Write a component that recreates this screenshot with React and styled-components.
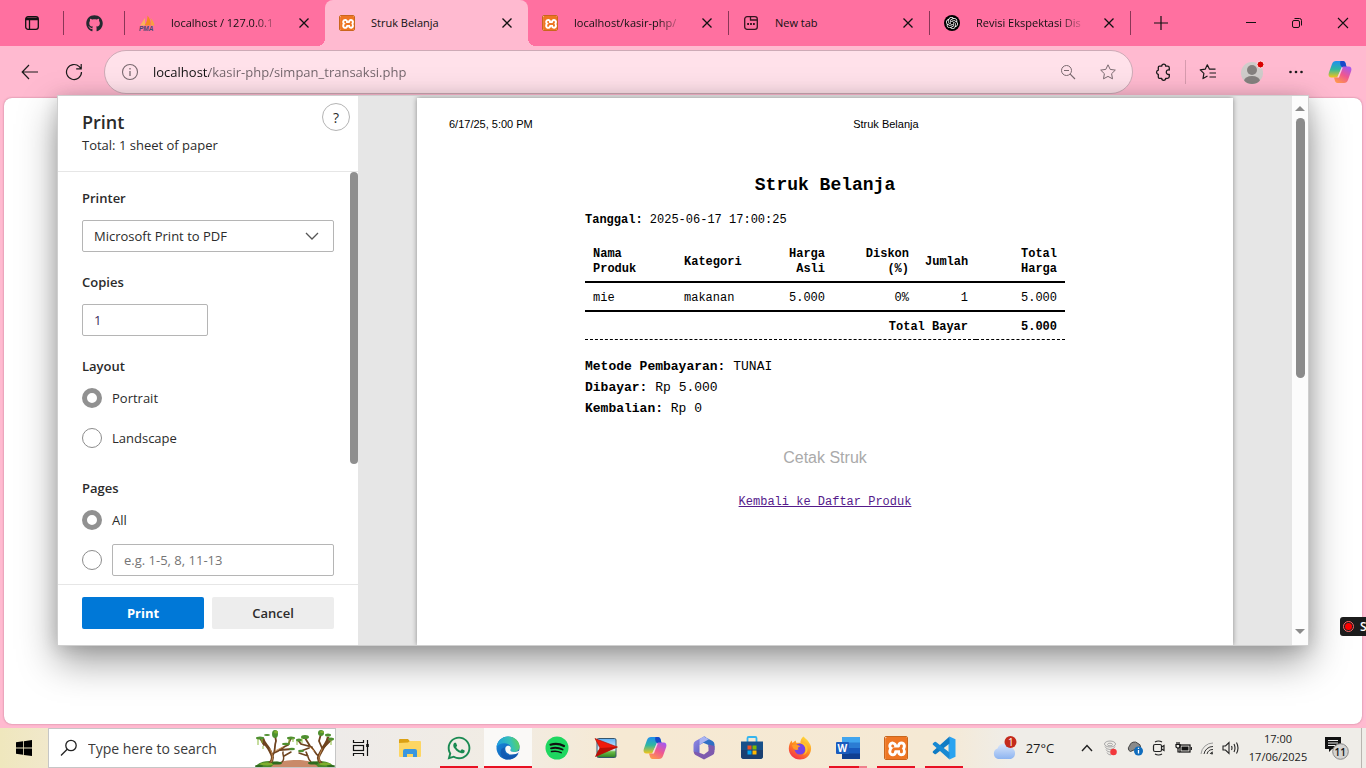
import React from "react";
import styled, { createGlobalStyle, css } from "styled-components";
import { FaGithub, FaWhatsapp } from "react-icons/fa";
import { SiXampp, SiOpenai } from "react-icons/si";

const ui = '"Open Sans", "Noto Sans", sans-serif';
const mono = '"Liberation Mono", monospace';
const arial = '"Liberation Sans", sans-serif';

const Global = createGlobalStyle`
  * { box-sizing: border-box; }
  body { margin: 0; font-family: ${ui}; font-size: 13px; color: #2b2b2b; overflow: hidden; }
  button, input, select { font: inherit; color: inherit; }
  button { border: 0; padding: 0; background: none; display: flex; align-items: center; justify-content: center; }
  svg { display: block; flex: none; }
`;

const Screen = styled.div`
  min-height: 100vh;
  display: flex;
  flex-direction: column;
  background: #ffbad0;
`;

/* ---------- tab strip ---------- */
const TabStrip = styled.header`
  height: 46px;
  display: flex;
  align-items: stretch;
  background: #ff70a0;
  color: #111;
`;
const StripButton = styled.button`
  width: ${(p) => p.$w}px;
  flex: none;
`;
const Divider = styled.span`
  width: 1px;
  height: 24px;
  flex: none;
  align-self: center;
  background: ${(p) => (p.$soft ? "#d79bae" : "#8a3656")};
`;
const Tab = styled.div`
  position: relative;
  flex: 0 1 ${(p) => (p.$active ? 203 : 200)}px;
  min-width: 0;
  display: flex;
  align-items: center;
  gap: 16px;
  padding: 0 14px;
  ${(p) =>
    p.$active &&
    css`
      background: #ffbad0;
      border-radius: 8px 8px 0 0;
      &::before,
      &::after {
        content: "";
        position: absolute;
        bottom: 0;
        width: 8px;
        height: 8px;
      }
      &::before {
        left: -8px;
        background: radial-gradient(circle at 0 0, transparent 8px, #ffbad0 8px);
      }
      &::after {
        right: -8px;
        background: radial-gradient(circle at 100% 0, transparent 8px, #ffbad0 8px);
      }
    `}
`;
const TabTitle = styled.button`
  flex: 1;
  min-width: 0;
  justify-content: flex-start;
  white-space: nowrap;
  font-size: 11px;
  line-height: 20px;
  mask-image: ${(p) => (p.$fade ? "linear-gradient(to right, #000 76%, transparent 100%)" : "none")};
`;
const WindowControls = styled.div`
  margin-left: auto;
  display: flex;
`;

/* ---------- toolbar ---------- */
const Toolbar = styled.nav`
  height: 52px;
  display: flex;
  align-items: center;
  padding: 0 4px 0 8px;
`;
const ToolButton = styled.button`
  width: 44px;
  height: 40px;
  flex: none;
  color: #1b1b1b;
`;
const AddressBar = styled.label`
  flex: 1;
  height: 44px;
  margin: 0 8px;
  display: flex;
  align-items: center;
  gap: 14px;
  padding: 0 16px;
  border: 1px solid #cdaab6;
  border-radius: 22px;
  background: #ffe1ea;
  color: #7a6a70;
`;
const AddressInput = styled.input`
  flex: 1;
  min-width: 0;
  border: 0;
  padding: 0;
  outline: 0;
  font-size: 13px;
  line-height: 20px;
  color: transparent;
  background: linear-gradient(to right, #111 56px, #6f6268 56px);
  background-clip: text;
  -webkit-background-clip: text;
`;
const BarActions = styled.span`
  display: flex;
  gap: 24px;
`;

/* ---------- page and dialog ---------- */
const PageArea = styled.main`
  position: relative;
  flex: 1;
  margin: 0 4px 4px;
  padding-bottom: 75px;
  background: #fff;
  border-radius: 8px;
  box-shadow: 0 0 2px rgba(120, 40, 70, 0.5);
`;
const Dialog = styled.section`
  position: relative;
  top: -3px;
  margin: 0 53px;
  display: flex;
  border: 1px solid #cfcfcf;
  background: #fff;
  box-shadow: 0 16px 36px rgba(0, 0, 0, 0.38), 0 2px 16px rgba(0, 0, 0, 0.14);
`;
const Settings = styled.form`
  width: 300px;
  flex: none;
  display: flex;
  flex-direction: column;
`;
const SettingsHead = styled.div`
  display: flex;
  justify-content: space-between;
  align-items: flex-start;
  height: 76px;
  padding: 7px 8px 0 24px;
  border-bottom: 1px solid #e6e6e6;
`;
const Heading = styled.h1`
  margin: 6px 0 0;
  font-size: 18px;
  line-height: 26px;
  font-weight: 600;
`;
const SubHeading = styled.p`
  margin: 0;
  font-size: 13px;
  line-height: 20px;
`;
const HelpButton = styled.button`
  width: 28px;
  height: 28px;
  border: 1px solid #b4b4b4;
  border-radius: 50%;
  font-size: 14px;
`;
const SettingsBody = styled.div`
  display: flex;
`;
const Fields = styled.div`
  flex: 1;
  display: flex;
  flex-direction: column;
  gap: 20px;
  padding: 16px 16px 4px 24px;
`;
const Thumb = styled.span`
  width: 8px;
  height: 292px;
  border-radius: 4px;
  background: #8f8f8f;
`;
const Field = styled.div`
  display: flex;
  flex-direction: column;
  gap: ${(p) => (p.$tight ? 2 : 12)}px;
`;
const FieldLabel = styled.label`
  font-size: 13px;
  line-height: 20px;
  font-weight: 600;
`;
const boxed = css`
  height: 32px;
  border: 1px solid #b5b5b5;
  border-radius: 2px;
  padding: 0 11px;
  background: transparent;
  outline: 0;
`;
const SelectBox = styled.div`
  display: grid;
  align-items: center;
  & > * {
    grid-area: 1 / 1;
  }
  & > svg {
    justify-self: end;
    margin-right: 15px;
  }
`;
const Select = styled.select`
  ${boxed}
  width: 100%;
  appearance: none;
`;
const CopiesInput = styled.input`
  ${boxed}
  width: 126px;
  color: #3b2a5c;
`;
const RangeInput = styled.input`
  ${boxed}
  flex: 1;
  min-width: 0;
  &::placeholder {
    color: #757575;
  }
`;
const RadioRow = styled.div`
  height: 40px;
  display: flex;
  align-items: center;
  gap: 10px;
`;
const Radio = styled.input`
  appearance: none;
  width: 20px;
  height: 20px;
  flex: none;
  margin: 0;
  border: 1px solid #8c8c8c;
  border-radius: 50%;
  &:checked {
    border: 5px solid #919191;
  }
`;
const Actions = styled.div`
  display: flex;
  gap: 8px;
  padding: 12px 24px 16px;
  border-top: 1px solid #e6e6e6;
`;
const ActionButton = styled.button`
  flex: 1;
  height: 32px;
  border-radius: 2px;
  font-weight: ${(p) => (p.$primary ? 700 : 600)};
  background: ${(p) => (p.$primary ? "#0078d7" : "#ededed")};
  color: ${(p) => (p.$primary ? "#fff" : "#2b2b2b")};
`;
const Preview = styled.div`
  flex: 1;
  min-width: 0;
  display: flex;
  justify-content: center;
  padding-top: 2px;
  overflow: hidden;
  background: #e6e6e6;
`;
const Sheet = styled.article`
  width: 816px;
  background: #fff;
  color: #000;
  box-shadow: 0 0 5px rgba(0, 0, 0, 0.4);
`;
const SheetHeader = styled.div`
  display: flex;
  padding: 19px 0 0 32px;
  font: 11px/14px ${arial};
`;
const SheetTitle = styled.span`
  flex: 1;
  margin-left: 6px;
  text-align: center;
`;
const Receipt = styled.div`
  width: 480px;
  max-width: 100%;
  margin: 0 auto;
  padding-top: 44px;
  font: 12px/21px ${mono};
`;
const ReceiptTitle = styled.h2`
  margin: 0 0 14px;
  font-size: 18px;
  line-height: 21px;
  text-align: center;
`;
const Line = styled.p`
  margin: 0;
  font-size: ${(p) => (p.$large ? 13 : 12)}px;
`;
const ItemTable = styled.table`
  width: 100%;
  margin: 8px 0 16px;
  table-layout: fixed;
  border-collapse: separate;
  border-spacing: 0;
  line-height: 15px;
`;
const Cell = styled.td`
  padding: 8px 8px 4px;
  text-align: ${(p) => (p.$left ? "left" : "right")};
  font-weight: ${(p) => (p.$bold ? 700 : 400)};
  border-bottom: ${(p) => (p.$last ? "1px dashed #000" : "2px solid #000")};
`;
const ReceiptFooter = styled.div`
  display: flex;
  flex-direction: column;
  align-items: center;
  gap: 24px;
  padding-top: 28px;
`;
const DisabledButton = styled.button`
  font: 16px/21px ${arial};
  color: #aaa;
`;
const BackLink = styled.a`
  color: #551a8b;
`;
const ScrollBar = styled.div`
  width: 16px;
  flex: none;
  display: flex;
  flex-direction: column;
  align-items: center;
  padding: 9px 0 10px;
  background: #fcfcfc;
`;
const ScrollThumb = styled.span`
  width: 9px;
  height: 260px;
  margin: 7px 0 auto;
  border-radius: 5px;
  background: #8b8b8b;
`;
const Recorder = styled.div`
  position: absolute;
  right: -4px;
  bottom: 88px;
  width: 26px;
  height: 19px;
  display: flex;
  align-items: center;
  gap: 6px;
  padding-left: 3px;
  border-radius: 3px 0 0 3px;
  background: #1c1c1c;
  color: #fff;
  font-size: 12px;
  font-weight: 600;
`;

/* ---------- taskbar ---------- */
const Taskbar = styled.footer`
  height: 40px;
  display: flex;
  background: linear-gradient(to right, #efe7bd 0, #f1e8cb 48px, #eeebe9 336px, #f1ece4 500px, #f6e9d3 620px, #f5e9d4 940px, #efede8 1010px);
  color: #1b1b1b;
`;
const StartButton = styled.button`
  width: 48px;
`;
const SearchBox = styled.label`
  width: 288px;
  display: flex;
  align-items: center;
  gap: 10px;
  padding-left: 11px;
  overflow: hidden;
  border: 1px solid #c6c6c6;
  background: #fff;
`;
const SearchInput = styled.input`
  flex: 1;
  min-width: 0;
  border: 0;
  padding: 0;
  outline: 0;
  font-size: 14px;
  &::placeholder {
    color: #3b3b3b;
  }
`;
const Apps = styled.div`
  display: flex;
  gap: ${(p) => p.$gap}px;
  padding-left: ${(p) => p.$gap}px;
`;
const AppButton = styled.button`
  width: 48px;
  height: 40px;
  background-color: ${(p) => (p.$focused ? "#faf9f7" : "transparent")};
  background-image: ${(p) => {
    if (!p.$open) return "none";
    return p.$multi
      ? "linear-gradient(to right, #e81123 30px, #f0808c 30px)"
      : "linear-gradient(#e81123, #e81123)";
  }};
  background-repeat: no-repeat;
  background-position: center bottom;
  background-size: ${(p) => (p.$focused ? "48px" : "38px")} 2px;
`;
const Tray = styled.div`
  margin-left: auto;
  display: flex;
  align-items: center;
`;
const TrayButton = styled.button`
  width: ${(p) => p.$w || 24}px;
  height: 40px;
  gap: 8px;
`;
const Weather = styled(TrayButton)`
  margin-right: 16px;
`;
const Clock = styled.button`
  width: 70px;
  flex-direction: column;
  font-size: 11px;
  line-height: 18px;
`;
const ShowDesktop = styled.button`
  width: 5px;
  height: 40px;
  border-left: 1px solid #b9b5b0;
`;

/* ---------- icons ---------- */
const Svg = ({ s = 16, w, h, vb, children, ...rest }) => (
  <svg width={w || s} height={h || s} viewBox={vb || `0 0 ${w || s} ${h || s}`} fill="none" stroke="currentColor" strokeWidth="1" aria-hidden="true" {...rest}>
    {children}
  </svg>
);
const CloseIcon = ({ s = 14, r = 4.5, sw = 1.3 }) => (
  <Svg s={s} strokeWidth={sw}>
    <path d={`M${7 - r} ${7 - r}L${7 + r} ${7 + r}M${7 + r} ${7 - r}L${7 - r} ${7 + r}`} />
  </Svg>
);
const TabActionsIcon = () => (
  <Svg s={16} strokeWidth="1.3">
    <rect x="1.7" y="1.7" width="12.6" height="12.6" rx="2.4" />
    <path d="M2 3.4h12M2 4.4h12" strokeWidth="1.6" />
    <path d="M5.5 5v9" />
  </Svg>
);
const NewTabIcon = () => (
  <Svg s={16} strokeWidth="1.3" stroke="#35141f">
    <rect x="1.7" y="1.7" width="12.6" height="12.6" rx="2.4" />
    <path d="M7.5 2v3h6.5" />
    <path d="M4.2 9h1.8M7.1 9h1.8M10 9h1.8" strokeWidth="1.8" />
  </Svg>
);
const PmaIcon = () => (
  <Svg s={16} stroke="none">
    <path d="M1 10.500L6 3V10.500z" fill="#f9b45c" />
    <path d="M5.500 10.500C8 7 8.500 4 8.500 .5C11 3 12 7 11.500 10.500z" fill="#f68b1f" />
    <path d="M12 10.500C12.500 8 12 5 11.500 3C14 5.500 15 8 15.500 10.500z" fill="#f7a23b" />
    <text x="0" y="16" fontSize="6.500" fontWeight="700" fontStyle="italic" fontFamily="Liberation Sans" fill="#46486f">PMA</text>
  </Svg>
);
const XamppBox = styled.span`
  display: grid;
  place-items: center;
  width: ${(p) => p.$s}px;
  height: ${(p) => p.$s}px;
  border-radius: 2px;
  background: #fff;
  color: #ee7623;
  border: 1px solid #c9661c;
  overflow: hidden;
  flex: none;
`;
const XamppIcon = ({ s = 16 }) => (
  <XamppBox $s={s}>
    <SiXampp size={s} />
  </XamppBox>
);
const OpenAiBadge = styled.span`
  display: grid;
  place-items: center;
  width: 16px;
  height: 16px;
  flex: none;
  border-radius: 50%;
  background: #000;
  color: #fff;
`;
const BackIcon = () => (
  <Svg s={18} strokeWidth="1.2"><path d="M17 9H1.500M8 2L1.200 9L8 16" /></Svg>
);
const ReloadIcon = () => (
  <Svg s={18} strokeWidth="1.2"><path d="M16.500 9A7.500 7.500 0 1 1 14.300 3.700L16 5.500M16.200 1v4.800h-5" /></Svg>
);
const InfoIcon = () => (
  <Svg s={18} strokeWidth="1.1"><circle cx="9" cy="9" r="7.500" /><path d="M9 8v5M9 5v1.500" strokeWidth="1.300" /></Svg>
);
const ZoomOutIcon = () => (
  <Svg s={16}><circle cx="6.500" cy="6.500" r="5" /><path d="M4 6.500h5M10.200 10.200L15 15" strokeWidth="1.200" /></Svg>
);
const StarIcon = () => (
  <Svg s={16}><path d="M8 .8L10.200 5.400L15.300 6.100L11.600 9.700L12.500 14.800L8 12.400L3.500 14.800L4.400 9.700L.7 6.100L5.800 5.400Z" strokeLinejoin="round" /></Svg>
);
const PuzzleIcon = () => (
  <Svg s={18} strokeWidth="1.300"><path d="M5.500 3.200H7.700A2 2 0 0 1 11.700 3.200H13.500Q15.300 3.200 15.300 5V7C13.500 6.600 12.300 7.600 12.300 9.200S13.500 11.800 15.300 11.400V13.500Q15.300 15.300 13.500 15.300H11.700A2 2 0 0 1 7.700 15.300H5.500Q4.300 15.300 4.300 14V11.500A2.200 2.200 0 0 1 4.300 7.200V4.500Q4.300 3.200 5.500 3.200Z" strokeLinejoin="round" /></Svg>
);
const FavoritesIcon = () => (
  <Svg s={18} strokeWidth="1.200"><path d="M8.500 13L4 15.600L4.900 10.400L1.200 6.900L6.200 6.200L8.300 1.800L10.500 6.200H16.500M10.500 10H17M10.500 14H17" strokeLinejoin="round" /></Svg>
);
const ProfileIcon = () => (
  <Svg s={24} stroke="none">
    <defs><clipPath id="pf"><circle cx="12" cy="13" r="11" /></clipPath></defs>
    <circle cx="12" cy="13" r="11" fill="#cfccca" />
    <g clipPath="url(#pf)" fill="#85817f"><circle cx="12" cy="10" r="5" /><ellipse cx="12" cy="21" rx="8" ry="5" /></g>
    <circle cx="20.500" cy="4.500" r="3.500" fill="#d80000" stroke="#ffe0e8" />
  </Svg>
);
const DotsIcon = () => (
  <Svg s={16} stroke="none" fill="currentColor"><circle cx="2.500" cy="8" r="1.300" /><circle cx="8" cy="8" r="1.300" /><circle cx="13.500" cy="8" r="1.300" /></Svg>
);
const CopilotIcon = ({ id }) => (
  <Svg s={24} stroke="none">
    <defs>
      <linearGradient id={id + "a"} x1="0" y1="0" x2="0" y2="1"><stop offset="0" stopColor="#1f8ef0" /><stop offset=".5" stopColor="#2fb7a0" /><stop offset="1" stopColor="#f5c518" /></linearGradient>
      <linearGradient id={id + "b"} x1=".8" y1="0" x2=".2" y2="1"><stop offset="0" stopColor="#a558f0" /><stop offset=".5" stopColor="#f0588f" /><stop offset="1" stopColor="#ff9a4a" /></linearGradient>
    </defs>
    <path d="M8 1h7c1.500 0 2.200 1 2.600 2.500L18.500 7H14L10 15.500C9.500 17 9 17.500 7.500 17.500H3.500C1 17.500 0 15.500 .8 13L4 4C4.700 2 6 1 8 1z" fill={`url(#${id}a)`} />
    <path d="M12.500 1h2.500c1.500 0 2.200 1 2.600 2.500L18.500 7H14.500c-1.500 0-3-3-2-6z" fill="#1748c9" />
    <path d="M16 23H9.500c-1.500 0-2.200-1-2.600-2.500L6 17.500h4L13.500 8c.5-1 1.200-1.500 2.500-1.500h4.500c2.500 0 3.500 2 2.700 4.500L20 20c-.7 2-2 3-4 3z" fill={`url(#${id}b)`} />
    <path d="M14.200 7.500L10.300 17.500" stroke="#fff" strokeOpacity=".7" strokeWidth="1.200" />
  </Svg>
);
const ChevronDown = () => (
  <Svg w={14} h={8} stroke="#555" strokeWidth="1.300"><path d="M1 1L7 7L13 1" /></Svg>
);
const Arrow = ({ up }) => (
  <Svg w={10} h={6} stroke="none" fill="#8b8b8b"><path d={up ? "M0 6L5 1L10 6z" : "M0 0L5 5L10 0z"} /></Svg>
);
const RecordIcon = () => (
  <Svg s={11} stroke="#f66"><circle cx="5.500" cy="5.500" r="5" /><circle cx="5.500" cy="5.500" r="3.500" fill="#f00" stroke="none" /></Svg>
);
const WindowsIcon = () => (
  <Svg s={16} stroke="none" fill="#000"><path d="M0 2.200L7 1.300V7.600H0zM7.800 1.200L16 0V7.600H7.800zM0 8.400H7V14.700L0 13.800zM7.800 8.400H16V16L7.800 14.900z" /></Svg>
);
const SearchIcon = () => (
  <Svg s={18} stroke="#222" strokeWidth="1.300"><circle cx="11" cy="6.500" r="5.200" /><path d="M7.200 10.300L1 16.500" /></Svg>
);
const TreesArt = () => (
  <Svg w={80} h={38} stroke="none">
    <path d="M0 38C3 34 8 32 14 32L30 33.500H50L64 32C72 32 77 35 80 38z" fill="#4a8a2a" />
    <path d="M16 38C20 33 30 31 42 31S60 34 63 38z" fill="#c98a68" />
    <g stroke="#6e431f" strokeLinecap="round" fill="none">
      <path d="M15 34C20 29 16 24 14 20C12 16 9 15 8 10" strokeWidth="3" />
      <path d="M17 27C21 24 19 17 21 12L20 6M19 24C25 22 27 18 33 16L36 9M9 16L5 9M25 21L37 20" strokeWidth="1.800" />
      <path d="M66 34C60 29 66 24 68 19C70 15 73 13 73 9" strokeWidth="3" />
      <path d="M64 27C59 25 60 20 55 17L50 9M57 18L46 15L43 11M69 18L77 10M67 19L64 12L66 5M54 19L46 22" strokeWidth="1.800" />
      <path d="M27 33C31 29 27 26 28 23M29 27L36 23M56 33C52 29 53 26 51 23M53 27L44 24" strokeWidth="1.500" />
    </g>
    <g stroke="#c48a50" strokeLinecap="round" strokeWidth="1" fill="none">
      <path d="M16 33C19 29 17 24 15 20M65 33C62 28 66 24 67 20M20 22L28 18M59 22L55 18" />
    </g>
    <g fill="#4f9030">
      <ellipse cx="20" cy="5" rx="3" ry="4" /><ellipse cx="5" cy="9" rx="4" ry="1.500" /><ellipse cx="36" cy="9" rx="4" ry="1.500" /><ellipse cx="31" cy="15" rx="4" ry="1.200" />
      <ellipse cx="37" cy="20" rx="3" ry="1.200" /><ellipse cx="50" cy="8" rx="4" ry="2" /><ellipse cx="44" cy="11" rx="3" ry="1.500" /><ellipse cx="66" cy="4" rx="3" ry="3" />
      <ellipse cx="76" cy="10" rx="3" ry="1.500" /><ellipse cx="73" cy="6" rx="3" ry="1.500" /><ellipse cx="46" cy="22" rx="3" ry="1.200" /><ellipse cx="12" cy="6" rx="3" ry="1" />
    </g>
    <path d="M3 10V16M7 10V14M34 10V14M38 9V13M47 9V14M76 11V16M8 17V20M42 12V16" stroke="#8dbb3f" strokeWidth="1" />
    <g fill="#7fae2e"><ellipse cx="12" cy="35" rx="7" ry="1.500" /><ellipse cx="70" cy="35" rx="6" ry="1.500" /><ellipse cx="21" cy="3" rx="2" ry="1.500" /><ellipse cx="67" cy="3" rx="2" ry="1" /></g>
    <g fill="#2d6a1f"><ellipse cx="22" cy="34" rx="5" ry="1.500" /><ellipse cx="58" cy="34" rx="5" ry="1.500" /><ellipse cx="4" cy="37" rx="4" ry="1" /><ellipse cx="76" cy="37" rx="4" ry="1" /></g>
  </Svg>
);
const TaskViewIcon = () => (
  <Svg s={18} stroke="#111" strokeWidth="1.200"><path d="M1.500 1V3.500H11.500V1M1.500 17V14.500H11.500V17M15.500 1V17" /><rect x="1.500" y="6.500" width="10" height="5" /><path d="M14.200 6.500h2.600" strokeWidth="3" /></Svg>
);
const ExplorerIcon = () => (
  <Svg s={22} stroke="none">
    <path d="M0 3Q0 2 1 2H9L11 4.500V8H0z" fill="#dba114" /><path d="M0 6L9 5.500L11 4H21Q22 4 22 5V19Q22 20 21 20H1Q0 20 0 19z" fill="#fdd663" />
    <path d="M4 20V14Q4 12 6 12H16Q18 12 18 14V20H14V17H8V20z" fill="#3a97e0" />
  </Svg>
);
const EdgeIcon = () => (
  <Svg s={24} stroke="none">
    <defs>
      <linearGradient id="eg" x1="0" y1=".4" x2="1" y2=".2"><stop offset="0" stopColor="#1f9fe0" /><stop offset=".6" stopColor="#36c2b4" /><stop offset="1" stopColor="#63d34f" /></linearGradient>
      <linearGradient id="eb" x1="0" y1="0" x2="1" y2="1"><stop offset="0" stopColor="#1a8fe0" /><stop offset="1" stopColor="#0f4fa8" /></linearGradient>
    </defs>
    <circle cx="12" cy="12" r="11.500" fill="url(#eb)" />
    <path d="M.6 11C1.500 4.500 6.300.4 12 .4C18.500.4 23.600 5 23.600 10.500C23.600 14 21 16 18 16C15.500 16 14 15 14.500 13.800C15.500 12.500 15 10 12.500 8.300C8.500 6 2.500 7.500.6 11z" fill="url(#eg)" />
    <path d="M9 11C7.500 15 10 20.500 16 20C18.500 20 20.500 19 22.500 17.500C21.500 20 18 23.500 12 23.500C6 23.500 3 17 5.500 13Z" fill="#1156ad" opacity=".75" />
    <path d="M9.500 11.500C8.500 15 11 18.500 15.500 18.500C19 18.500 21 17.500 22.800 16.200L23.500 18L24 14C22 15.500 20 16 18 16C15.500 16 14 15 14.500 13.800C15.300 12.500 15 11 13.500 10C12 9.500 10 10 9.500 11.500z" fill="#faf9f7" />
  </Svg>
);
const SpotifyGlyph = () => (
  <Svg s={24} strokeLinecap="round">
    <circle cx="12" cy="12" r="11.500" fill="#1ed760" stroke="none" />
    <path d="M5.500 8.700C10 7.300 15 7.800 19 10" stroke="#111" strokeWidth="2.200" /><path d="M6 12.300C10 11.200 14 11.700 17.600 13.500" stroke="#111" strokeWidth="1.900" /><path d="M6.500 15.600C10 14.700 13.200 15.100 16.200 16.700" stroke="#111" strokeWidth="1.500" />
  </Svg>
);
const MediaArrowIcon = () => (
  <Svg s={24} stroke="none">
    <defs><linearGradient id="ma" x1="0" y1="0" x2="0" y2="1"><stop offset="0" stopColor="#5fb0f5" /><stop offset=".6" stopColor="#e9f5fb" /><stop offset=".7" stopColor="#6cc04a" /><stop offset="1" stopColor="#2f7f22" /></linearGradient></defs>
    <rect x="3" y="2.500" width="19" height="19" rx="1.500" fill="url(#ma)" stroke="#35566d" />
    <path d="M1 2.500L23.500 11L1.500 20.500L6 12z" fill="#f01a0c" stroke="#a50d05" strokeWidth=".6" /><path d="M1.500 20.500L6 12L23.500 11z" fill="#b80f06" />
  </Svg>
);
const M365Icon = () => (
  <Svg s={24} stroke="none">
    <defs><linearGradient id="m3" x1="0" y1="0" x2="1" y2="1"><stop offset="0" stopColor="#9a8fe8" /><stop offset="1" stopColor="#4d52b8" /></linearGradient></defs>
    <path d="M12 .5L3.500 5Q1.500 6.200 1.500 8.500V15.500L7.500 18.500V9L14 5.500V1z" fill="url(#m3)" />
    <path d="M12 .5L20.500 5Q22.500 6.200 22.500 8.500V14L16.500 11V9L9.500 6z" fill="#2f6fc4" />
    <path d="M22.500 10V15.500Q22.500 17.800 20.500 19L12 23.500L3.500 19Q2 18 1.500 15.500L8 17L12 18.500L16.500 15V8.500z" fill="#7e5aae" />
    <path d="M12 .5L17 3.200L12 6L7.500 9V3z" fill="#a9b3f2" />
  </Svg>
);
const StoreIcon = () => (
  <Svg s={24} stroke="none">
    <path d="M7.500 6V2.200Q7.500 1 8.700 1H15.300Q16.500 1 16.500 2.200V6" stroke="#35b5ee" strokeWidth="1.800" fill="none" />
    <path d="M1 5.500H23V20Q23 23 20 23H4Q1 23 1 20z" fill="#17508a" />
    <path d="M1 14H23V20Q23 23 20 23H4Q1 23 1 20z" fill="#1a3f70" />
    <path d="M7.500 9.500h4v4h-4z" fill="#f25022" /><path d="M12.500 9.500h4v4h-4z" fill="#7fba00" /><path d="M7.500 14.500h4v4h-4z" fill="#00a4ef" /><path d="M12.500 14.500h4v4h-4z" fill="#ffb900" />
  </Svg>
);
const FirefoxIcon = () => (
  <Svg s={24} stroke="none">
    <defs><linearGradient id="ff" x1=".8" y1="0" x2=".2" y2="1"><stop offset="0" stopColor="#ffe23f" /><stop offset=".5" stopColor="#ff8a1f" /><stop offset="1" stopColor="#f5274f" /></linearGradient></defs>
    <path d="M15.500.5C18 3 19.500 4 21 6.500C23 9 23.500 12 22.800 15C21.500 20 17.500 23.500 12 23.500C5.500 23.500.8 18.500.8 12.500C.8 9 2.300 6 3.500 4.500L4.500 7L7.500 4.500L8.500 7C10 6.500 11 6.500 12.500 7C12 5 13.500 2 15.500.5z" fill="url(#ff)" />
    <circle cx="12" cy="13" r="5.500" fill="#7542e5" />
    <path d="M4 9C7 7.500 11 9 12.500 10.500C10 10.500 9.500 12 10.500 13.500C7.500 15 4.500 13 4 9z" fill="#ff9a28" />
    <path d="M12.500 7C15 8 17.500 10.500 17.500 14C17.500 16 16.500 18 15 19C19 18 20.500 14 19 10C18 8 15 6 12.500 7z" fill="#ffc22e" />
  </Svg>
);
const WordIcon = () => (
  <Svg s={24} stroke="none">
    <path d="M6 1H24V7H6z" fill="#41a5ee" /><path d="M6 6.500H24V12.500H6z" fill="#2b7cd3" /><path d="M6 12H24V18H6z" fill="#185abd" /><path d="M6 17.500H24V23H6z" fill="#103f91" />
    <rect x="0" y="6" width="13" height="12" rx="1" fill="#1b5cbe" />
    <text x="1.500" y="15.500" fontSize="10" fontWeight="700" fontFamily="Open Sans" fill="#fff">W</text>
  </Svg>
);
const VsCodeIcon = () => (
  <Svg s={24} stroke="none">
    <path d="M17.500.5L23.500 3.300V20.700L17.500 23.500L16.500 18V6z" fill="#2aa3f0" />
    <path d="M17.500.5L1 15.300Q.3 16 1 16.700L2.500 18Q3.200 18.500 4 18L17.500 7.500z" fill="#0f7bc4" />
    <path d="M17.500 23.500L1 8.700Q.3 8 1 7.300L2.500 6Q3.200 5.500 4 6L17.500 16.500z" fill="#1889d3" />
  </Svg>
);
const WeatherIcon = () => (
  <Svg w={26} h={24} stroke="none">
    <defs><linearGradient id="wc" x1="0" y1="0" x2="0" y2="1"><stop offset="0" stopColor="#dbe7fb" /><stop offset="1" stopColor="#8db4f0" /></linearGradient></defs>
    <path d="M6 23A5.500 5.500 0 0 1 5.500 12.500A7 7 0 0 1 18.500 11.500A6 6 0 0 1 19 23z" fill="url(#wc)" />
    <circle cx="18.500" cy="6" r="6" fill="#c42b1c" /><text x="16" y="10" fontSize="10" fontFamily="Open Sans" fill="#fff">1</text>
  </Svg>
);
const UpIcon = () => <Svg w={12} h={8} stroke="#222" strokeWidth="1.400"><path d="M1 7L6 1.500L11 7" /></Svg>;
const CastIcon = () => (
  <Svg s={16} stroke="#a8a8a8"><ellipse cx="7" cy="4" rx="5.500" ry="3" /><path d="M2 6.500Q3 9.500 7 9.500T12 6.500M3 9.500Q4 12 7 12M4 12.500Q5 15 8 15" /><ellipse cx="7" cy="4.500" rx="2.500" ry="1.300" /><circle cx="10.500" cy="12" r="3.300" fill="#f2383c" stroke="none" /></Svg>
);
const CloudInfoIcon = () => (
  <Svg s={16} stroke="none"><path d="M3.500 11.500A3.200 3.200 0 0 1 2.500 6A5 5 0 0 1 11 3.500A3.500 3.500 0 0 1 13.500 7z" fill="#8a8a8a" stroke="#444" /><circle cx="11.500" cy="11" r="4.500" fill="#0f6cbd" /><path d="M11.500 10V13.500M11.500 7.800V9" stroke="#fff" strokeWidth="1.300" /></Svg>
);
const MeetIcon = () => (
  <Svg s={16} stroke="#222" strokeWidth="1.200"><rect x="2.500" y="4.500" width="8" height="7" rx="1.500" /><path d="M10.500 7L13 5.500V10.500L10.500 9M4 2Q7.500 0 11 2M4 14Q7.500 16 11 14" /></Svg>
);
const BatteryIcon = () => (
  <Svg w={17} h={14} stroke="#111" strokeWidth="1.200"><rect x="5" y="4" width="10" height="7" /><path d="M6.500 5.500h7v4h-7z" fill="#111" stroke="none" /><path d="M16.300 6v3" /><path d="M1 3.500h4V6L3 7.500L1 6zM2 1v2M4 1v2M3 7.500V11H5" /></Svg>
);
const WifiIcon = () => (
  <Svg s={14} stroke="#333"><path d="M1 13A12 12 0 0 1 13 2" stroke="#999" /><path d="M4 13A9 9 0 0 1 13 5.500M7 13A6 6 0 0 1 13 8.500M10 13A3.500 3.500 0 0 1 13 11" /><circle cx="12" cy="12.500" r="1" fill="#333" stroke="none" /></Svg>
);
const VolumeIcon = () => (
  <Svg w={18} h={14} stroke="#222" strokeWidth="1.100"><path d="M1 5H3.500L7 1.500V12.500L3.500 9H1zM9.500 5Q10.500 7 9.500 9M12 3Q14 7 12 11M14.500 1.500Q17.500 7 14.500 12.500" /></Svg>
);
const NoticeIcon = () => (
  <Svg s={24} stroke="none">
    <path d="M0 1H16V13H7L4 16V13H0z" fill="#111" /><path d="M3 4.500H13M3 7H13M3 9.500H10" stroke="#eee" strokeWidth="1.100" />
    <circle cx="15.500" cy="15.500" r="7.800" fill="#d4d3d1" stroke="#888" /><text x="9.500" y="19.500" fontSize="10" fontFamily="Open Sans" fontWeight="600" fill="#111">11</text>
  </Svg>
);

const tabs = [
  { title: "localhost / 127.0.0.1", fade: true, icon: <PmaIcon /> },
  { title: "Struk Belanja", active: true, icon: <XamppIcon /> },
  { title: "localhost/kasir-php/", fade: true, icon: <XamppIcon />, line: true },
  { title: "New tab", icon: <NewTabIcon />, line: true },
  { title: "Revisi Ekspektasi Dis", fade: true, icon: <OpenAiBadge><SiOpenai size={12} /></OpenAiBadge>, line: true },
];

const cols = [91, 73, 84, 84, 59, 89];
const heads = ["Nama Produk", "Kategori", "Harga Asli", "Diskon (%)", "Jumlah", "Total Harga"];
const item = ["mie", "makanan", "5.000", "0%", "1", "5.000"];

const pinned = [
  { name: "Task View", icon: <TaskViewIcon /> },
  { name: "File Explorer", icon: <ExplorerIcon /> },
  { name: "WhatsApp", icon: <FaWhatsapp size={26} color="#1a8a52" />, open: true },
  { name: "Edge", icon: <EdgeIcon />, open: true, focused: true },
  { name: "Spotify", icon: <SpotifyGlyph /> },
  { name: "Media", icon: <MediaArrowIcon /> },
  { name: "Copilot", icon: <CopilotIcon id="c2" /> },
  { name: "Microsoft 365", icon: <M365Icon /> },
];
const running = [
  { name: "Store", icon: <StoreIcon /> },
  { name: "Firefox", icon: <FirefoxIcon /> },
  { name: "Word", icon: <WordIcon />, open: true, multi: true },
  { name: "XAMPP", icon: <XamppIcon s={24} />, open: true },
  { name: "VS Code", icon: <VsCodeIcon />, open: true },
];

const AppGroup = ({ list, gap }) => (
  <Apps $gap={gap}>
    {list.map((a) => (
      <AppButton key={a.name} aria-label={a.name} $open={a.open} $multi={a.multi} $focused={a.focused}>{a.icon}</AppButton>
    ))}
  </Apps>
);

export default function App() {
  return (
    <Screen>
      <Global />
      <TabStrip>
        <StripButton $w={63} aria-label="Tab actions"><TabActionsIcon /></StripButton>
        <Divider />
        <StripButton $w={60} aria-label="GitHub"><FaGithub size={17} color="#24292f" /></StripButton>
        <Divider />
        {tabs.map((t, i) => (
          <React.Fragment key={t.title}>
            <Tab $active={t.active}>
              {t.icon}
              <TabTitle $fade={t.fade}>{t.title}</TabTitle>
              <button aria-label="Close tab"><CloseIcon /></button>
            </Tab>
            {t.line && <Divider />}
          </React.Fragment>
        ))}
        <StripButton $w={60} aria-label="New tab">
          <Svg s={14} strokeWidth="1.200"><path d="M7 0V14M0 7H14" /></Svg>
        </StripButton>
        <WindowControls>
          <StripButton $w={46} aria-label="Minimize"><Svg w={10} h={2} strokeWidth="1"><path d="M0 .5H10" /></Svg></StripButton>
          <StripButton $w={46} aria-label="Restore"><Svg s={12}><rect x="1.500" y="3.500" width="7" height="7" rx="1.500" /><path d="M3.500 1.500H8.500Q10.500 1.500 10.500 3.500V8.500" /></Svg></StripButton>
          <StripButton $w={46} aria-label="Close"><CloseIcon r={5} sw={1.1} /></StripButton>
        </WindowControls>
      </TabStrip>

      <Toolbar>
        <ToolButton aria-label="Back"><BackIcon /></ToolButton>
        <ToolButton aria-label="Reload"><ReloadIcon /></ToolButton>
        <AddressBar>
          <InfoIcon />
          <AddressInput aria-label="Address" defaultValue="localhost/kasir-php/simpan_transaksi.php" />
          <BarActions><ZoomOutIcon /><StarIcon /></BarActions>
        </AddressBar>
        <ToolButton aria-label="Extensions"><PuzzleIcon /></ToolButton>
        <Divider $soft />
        <ToolButton aria-label="Favorites"><FavoritesIcon /></ToolButton>
        <ToolButton aria-label="Profile"><ProfileIcon /></ToolButton>
        <ToolButton aria-label="More"><DotsIcon /></ToolButton>
        <ToolButton aria-label="Copilot"><CopilotIcon id="c1" /></ToolButton>
      </Toolbar>

      <PageArea>
        <Dialog role="dialog" aria-labelledby="print-title">
          <Settings onSubmit={(e) => e.preventDefault()}>
            <SettingsHead>
              <div>
                <Heading id="print-title">Print</Heading>
                <SubHeading>Total: 1 sheet of paper</SubHeading>
              </div>
              <HelpButton type="button" aria-label="Help">?</HelpButton>
            </SettingsHead>
            <SettingsBody>
              <Fields>
                <Field>
                  <FieldLabel htmlFor="printer">Printer</FieldLabel>
                  <SelectBox>
                    <Select id="printer"><option>Microsoft Print to PDF</option></Select>
                    <ChevronDown />
                  </SelectBox>
                </Field>
                <Field>
                  <FieldLabel htmlFor="copies">Copies</FieldLabel>
                  <CopiesInput id="copies" inputMode="numeric" defaultValue="1" />
                </Field>
                <Field $tight role="radiogroup" aria-labelledby="layout-label">
                  <FieldLabel as="span" id="layout-label">Layout</FieldLabel>
                  <div>
                    <RadioRow><Radio type="radio" name="layout" id="portrait" defaultChecked /><label htmlFor="portrait">Portrait</label></RadioRow>
                    <RadioRow><Radio type="radio" name="layout" id="landscape" /><label htmlFor="landscape">Landscape</label></RadioRow>
                  </div>
                </Field>
                <Field $tight role="radiogroup" aria-labelledby="pages-label">
                  <FieldLabel as="span" id="pages-label">Pages</FieldLabel>
                  <div>
                    <RadioRow><Radio type="radio" name="pages" id="all" defaultChecked /><label htmlFor="all">All</label></RadioRow>
                    <RadioRow>
                      <Radio type="radio" name="pages" aria-label="Page range" />
                      <RangeInput aria-label="Pages to print" placeholder="e.g. 1-5, 8, 11-13" />
                    </RadioRow>
                  </div>
                </Field>
              </Fields>
              <Thumb />
            </SettingsBody>
            <Actions>
              <ActionButton $primary type="submit">Print</ActionButton>
              <ActionButton type="button">Cancel</ActionButton>
            </Actions>
          </Settings>

          <Preview>
            <Sheet>
              <SheetHeader><span>6/17/25, 5:00 PM</span><SheetTitle>Struk Belanja</SheetTitle></SheetHeader>
              <Receipt>
                <ReceiptTitle>Struk Belanja</ReceiptTitle>
                <Line><b>Tanggal:</b> 2025-06-17 17:00:25</Line>
                <ItemTable>
                  <colgroup>{cols.map((w, i) => <col key={i} width={w} />)}</colgroup>
                  <thead>
                    <tr>{heads.map((h, i) => <Cell as="th" key={h} $bold $left={i < 2}>{h}</Cell>)}</tr>
                  </thead>
                  <tbody>
                    <tr>{item.map((v, i) => <Cell key={i} $left={i < 2}>{v}</Cell>)}</tr>
                    <tr><Cell colSpan={5} $bold $last>Total Bayar</Cell><Cell $bold $last>5.000</Cell></tr>
                  </tbody>
                </ItemTable>
                <Line $large><b>Metode Pembayaran:</b> TUNAI</Line>
                <Line $large><b>Dibayar:</b> Rp 5.000</Line>
                <Line $large><b>Kembalian:</b> Rp 0</Line>
                <ReceiptFooter>
                  <DisabledButton disabled>Cetak Struk</DisabledButton>
                  <BackLink href="#produk">Kembali ke Daftar Produk</BackLink>
                </ReceiptFooter>
              </Receipt>
            </Sheet>
          </Preview>
          <ScrollBar>
            <Arrow up />
            <ScrollThumb />
            <Arrow />
          </ScrollBar>
        </Dialog>
        <Recorder><RecordIcon />S</Recorder>
      </PageArea>

      <Taskbar>
        <StartButton aria-label="Start"><WindowsIcon /></StartButton>
        <SearchBox>
          <SearchIcon />
          <SearchInput aria-label="Search" placeholder="Type here to search" />
          <TreesArt />
        </SearchBox>
        <AppGroup list={pinned} gap={1} />
        <AppGroup list={running} gap={0} />
        <Tray>
          <Weather $w={72}><WeatherIcon />27°C</Weather>
          <TrayButton aria-label="Hidden icons"><UpIcon /></TrayButton>
          <TrayButton aria-label="Cast"><CastIcon /></TrayButton>
          <TrayButton aria-label="OneDrive"><CloudInfoIcon /></TrayButton>
          <TrayButton aria-label="Meet now"><MeetIcon /></TrayButton>
          <TrayButton aria-label="Battery"><BatteryIcon /></TrayButton>
          <TrayButton aria-label="Network"><WifiIcon /></TrayButton>
          <TrayButton aria-label="Volume"><VolumeIcon /></TrayButton>
          <Clock><span>17:00</span><span>17/06/2025</span></Clock>
          <TrayButton $w={48} aria-label="Notifications"><NoticeIcon /></TrayButton>
          <ShowDesktop aria-label="Show desktop" />
        </Tray>
      </Taskbar>
    </Screen>
  );
}
